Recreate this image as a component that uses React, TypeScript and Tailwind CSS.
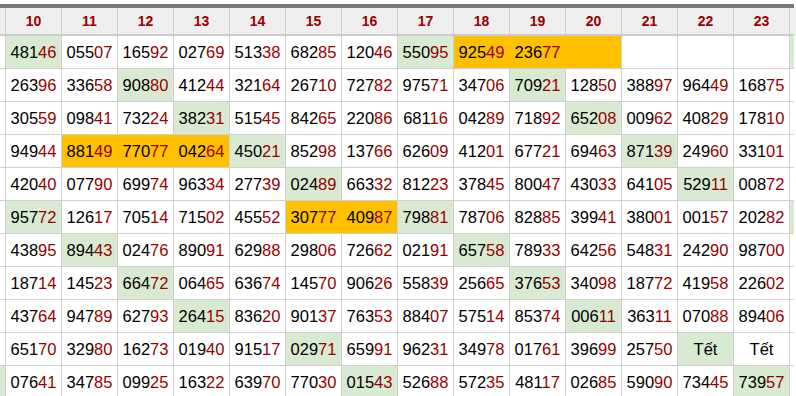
import React from 'react';

type Fill = '' | 'g' | 'o';

// each cell: "number:fill" — fill g = green, o = orange
const ROWS: string[][] = [
  ['48146:g', '05507', '16592', '02769', '51338', '68285', '12046', '55095:g', '92549:o', '23677:o', ':o', '', '', ''],
  ['26396', '33658', '90880:g', '41244', '32164', '26710', '72782', '97571', '34706', '70921:g', '12850', '38897', '96449', '16875'],
  ['30559', '09841', '73224', '38231:g', '51545', '84265', '22086', '68116', '04289', '71892', '65208:g', '00962', '40829', '17810'],
  ['94944', '88149:o', '77077:o', '04264:o', '45021:g', '85298', '13766', '62609', '41201', '67721', '69463', '87139:g', '24960', '33101'],
  ['42040', '07790', '69974', '96334', '27739', '02489:g', '66332', '81223', '37845', '80047', '43033', '64105', '52911:g', '00872'],
  ['95772:g', '12617', '70514', '71502', '45552', '30777:o', '40987:o', '79881:g', '78706', '82885', '39941', '38001', '00157', '20282'],
  ['43895', '89443:g', '02476', '89091', '62988', '29806', '72662', '02191', '65758:g', '78933', '64256', '54831', '24290', '98700'],
  ['18714', '14523', '66472:g', '06465', '63674', '14570', '90626', '55839', '25665', '37653:g', '34098', '18772', '41958', '22602'],
  ['43764', '94789', '62793', '26415:g', '83620', '90137', '76353', '88407', '57514', '85374', '00611:g', '36311', '07088', '89406'],
  ['65170', '32980', '16273', '01940', '91517', '02971:g', '65991', '96231', '34978', '01761', '39699', '25750', 'Tết:g', 'Tết'],
  ['07641', '34785', '09925', '16322', '63970', '77030', '01543:g', '52688', '57235', '48117', '02685', '59090', '73445', '73957:g'],
];

// partial columns at the left and right edge
const LEFT_GREEN = [10];
const RIGHT_GREEN = [0, 5];

const DAYS = ['10', '11', '12', '13', '14', '15', '16', '17', '18', '19', '20', '21', '22', '23'];

function parse(cell: string): { text: string; fill: Fill } {
  const [text, fill] = cell.split(':');
  return { text, fill: (fill as Fill) || '' };
}

function Num({ text }: { text: string }) {
  if (!/^\d{5}$/.test(text)) return <span className="text-black">{text}</span>;
  return (
    <span>
      <span className="text-black">{text.slice(0, 3)}</span>
      <span className="text-[#990000]">{text.slice(3)}</span>
    </span>
  );
}

function Cell({ text, fill, joinRight }: { text: string; fill: Fill; joinRight: boolean }) {
  const bg = fill === 'g' ? 'bg-[#d9ead3]' : fill === 'o' ? 'bg-[#ffc000]' : 'bg-white';
  const border = joinRight
    ? fill === 'o'
      ? 'border-r-[#ffc000]'
      : 'border-r-[#d9ead3]'
    : 'border-r-[#d0d0d0]';
  return (
    <div className={`w-[56px] h-[33px] flex items-center justify-center border-r border-b border-b-[#d0d0d0] ${border} ${bg}`}>
      {text && <Num text={text} />}
    </div>
  );
}

export default function App() {
  return (
    <div className="w-[796px] h-[396px] overflow-hidden bg-white font-[family-name:Arial,Liberation_Sans,sans-serif] text-[16.5px] leading-none">
      <div className="h-[4px]" />
      <div className="h-[4px] w-[794px] bg-[#777777]" />

      {/* header */}
      <div className="flex h-[28px] bg-[#eeeeee]">
        <div className="w-[6px] border-r border-b-2 border-[#cccccc]" />
        {DAYS.map(d => (
          <div
            key={d}
            className="w-[56px] flex items-center justify-center border-r border-b-2 border-[#cccccc] text-[14px] font-bold text-[#990000]"
          >
            {d}
          </div>
        ))}
        <div className="w-[4px] border-b-2 border-[#cccccc]" />
      </div>

      {/* body */}
      {ROWS.map((row, r) => {
        const cells = row.map(parse);
        return (
          <div key={r} className="flex">
            <div
              className={`w-[6px] h-[33px] border-r border-b border-[#d0d0d0] ${LEFT_GREEN.includes(r) ? 'bg-[#d9ead3]' : 'bg-white'}`}
            />
            {cells.map((c, i) => (
              <Cell
                key={i}
                text={c.text}
                fill={c.fill}
                joinRight={c.fill !== '' && i + 1 < cells.length && cells[i + 1].fill === c.fill}
              />
            ))}
            <div
              className={`w-[4px] h-[33px] border-b border-[#d0d0d0] ${RIGHT_GREEN.includes(r) ? 'bg-[#d9ead3]' : 'bg-white'}`}
            />
          </div>
        );
      })}
    </div>
  );
}
